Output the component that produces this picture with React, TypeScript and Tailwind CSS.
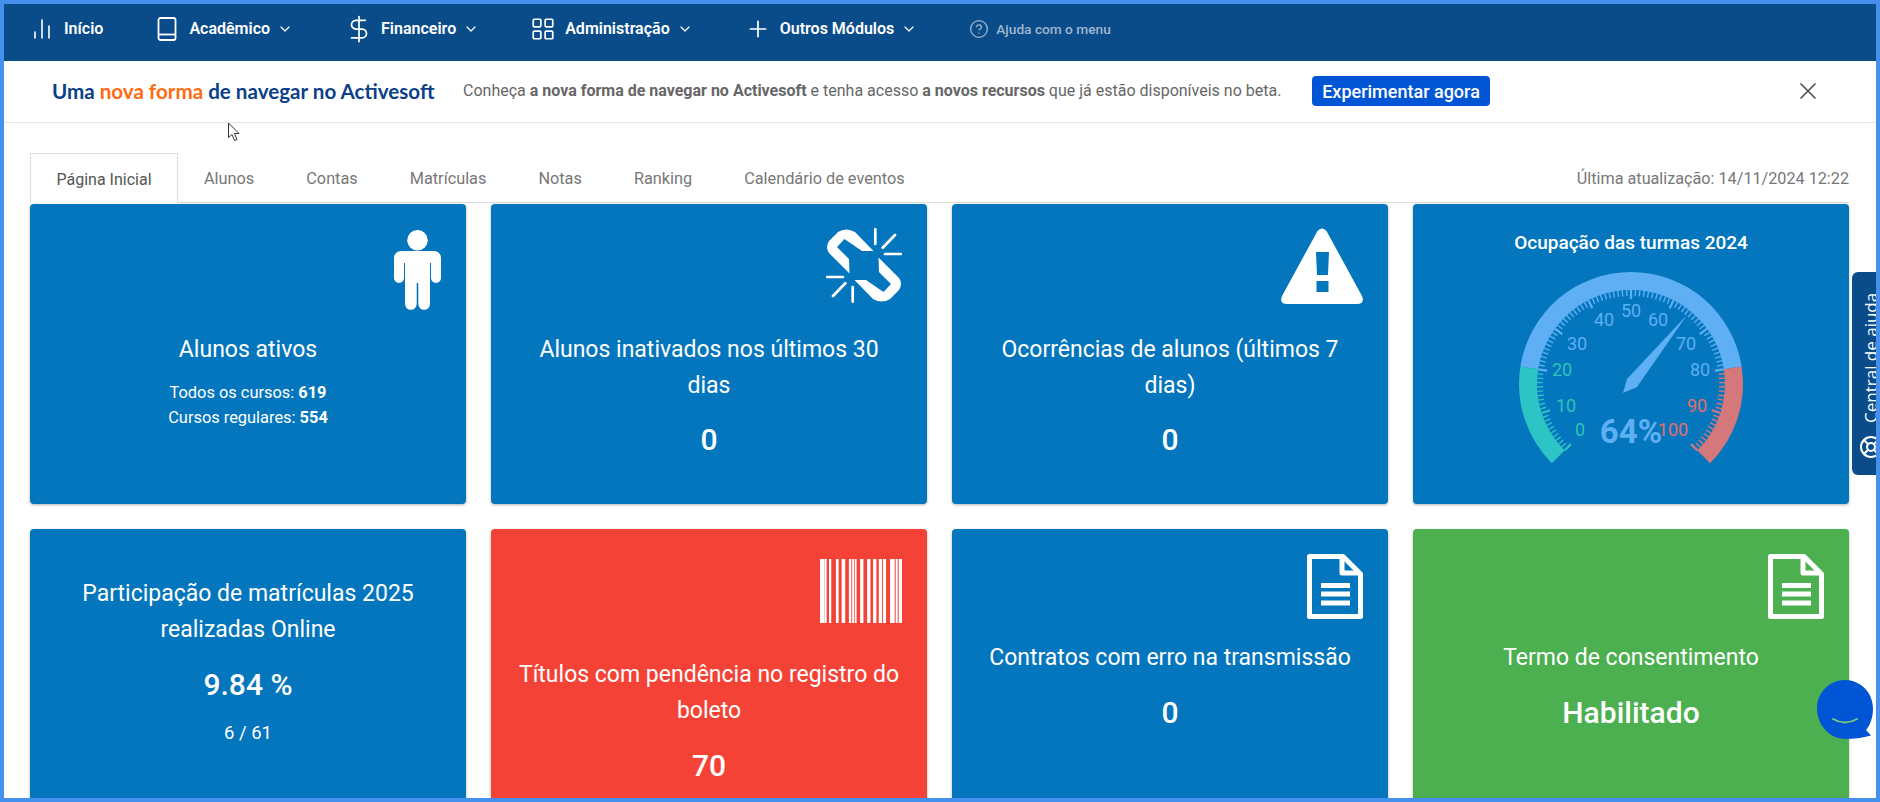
import type { ReactNode } from 'react';
import { ChartNoAxesColumn, ChevronDown, CircleHelp, DollarSign, LayoutGrid, LifeBuoy, Plus, X } from 'lucide-react';

function BookIcon() {
  return (
    <svg width="20" height="24" viewBox="0 0 20 24" fill="none" stroke="white" strokeWidth="1.8">
      <rect x="1.500" y="1" width="17" height="22" rx="2" />
      <path d="M1.500 17.500h17" />
    </svg>
  );
}

function NavItem({ icon, label, chevron = true }: { icon: ReactNode; label: string; chevron?: boolean }) {
  return (
    <div className="flex items-center">
      <span className="flex w-8 justify-center">{icon}</span>
      <span className="ml-[6px] text-[16px] font-semibold text-white">{label}</span>
      {chevron && <ChevronDown className="ml-[7px] h-[16px] w-[16px] text-white" strokeWidth={1.8} />}
    </div>
  );
}

function TopNav() {
  return (
    <nav className="flex h-[57px] items-center bg-[#0a4c8a] pb-[7px] pl-[26px] shadow-[0_1px_3px_rgba(0,0,0,0.3)]">
      <NavItem icon={<ChartNoAxesColumn size={24} color="white" strokeWidth={1.6} />} label="Início" chevron={false} />
      <div className="ml-[48px]">
        <NavItem icon={<BookIcon />} label="Acadêmico" />
      </div>
      <div className="ml-[50px]">
        <NavItem icon={<DollarSign size={30} color="white" strokeWidth={1.4} />} label="Financeiro" />
      </div>
      <div className="ml-[48px]">
        <NavItem icon={<LayoutGrid size={26} color="white" strokeWidth={1.6} />} label="Administração" />
      </div>
      <div className="ml-[49px]">
        <NavItem icon={<Plus size={26} color="white" strokeWidth={1.6} />} label="Outros Módulos" />
      </div>
      <div className="ml-[52px] flex items-center text-[#9fb6cf]">
        <CircleHelp size={20} strokeWidth={1.6} />
        <span className="ml-[7px] text-[13.700px] font-medium">Ajuda com o menu</span>
      </div>
    </nav>
  );
}

function Banner() {
  return (
    <div className="flex h-[62px] items-center border-b border-[#e6e6e6] bg-white pb-[1px] pl-[52px]">
      <span className="w-[381px] whitespace-nowrap font-['Lato',sans-serif] text-[20.600px] font-bold text-[#0b3f8a]">
        Uma <span className="text-[#ff6a13]">nova forma</span> de navegar no Activesoft
      </span>
      <span className="ml-[30px] w-[819px] whitespace-nowrap text-[16px] text-[#666]">
        Conheça <b className="font-bold">a nova forma de navegar no Activesoft</b> e tenha acesso{' '}
        <b className="font-bold">a novos recursos</b> que já estão disponíveis no beta.
      </span>
      <button className="ml-[30px] h-[30px] w-[178px] rounded-[4px] bg-[#0055d4] text-[18px] font-medium text-white">
        Experimentar agora
      </button>
      <X className="ml-[304px] text-[#555]" size={28} strokeWidth={1.5} />
    </div>
  );
}

const tabs = ['Alunos', 'Contas', 'Matrículas', 'Notas', 'Ranking', 'Calendário de eventos'];

function Tabs() {
  return (
    <div className="ml-[30px] mt-[30px] flex h-[50px] w-[1819px] items-center border-b border-[#ddd] pt-[3px] text-[16.300px] text-[#777]">
      <div className="-mb-[1px] -mt-[3px] flex h-[50px] w-[148px] items-center justify-center border border-b-0 border-[#ddd] bg-white pt-[3px] text-[16px] text-[#555]">
        Página Inicial
      </div>
      {tabs.map((tab) => (
        <span key={tab} className="ml-[26px] mr-[26px]">
          {tab}
        </span>
      ))}
      <span className="ml-auto text-[16.200px]">Última atualização: 14/11/2024 12:22</span>
    </div>
  );
}

function PersonIcon() {
  return (
    <svg width="47" height="80" viewBox="0 0 47 80" fill="white">
      <circle cx="23.500" cy="10.300" r="10.300" />
      <path d="M7 21H40a7 7 0 0 1 7 7V48a5 5 0 0 1-10 0V33H36V74a5.850 5.850 0 0 1-11.700 0V53H22.700V74a5.850 5.850 0 0 1-11.700 0V33H10V48a5 5 0 0 1-10 0V28a7 7 0 0 1 7-7Z" />
    </svg>
  );
}

function BrokenLinkIcon() {
  const link = 'M47.500 23L29 4Q20 -1 12 4L3 13Q-1 19.500 3 25L23.500 45.500L23 31L11 19L18.500 11L36 23Z';
  const rays = 'M49.300 1.300V16M69 7L56.700 19.700M59 26H74.700';
  return (
    <svg width="76" height="75" viewBox="0 0 76 75" fill="none">
      <path d={link} fill="white" />
      <path d={link} fill="white" transform="rotate(180 38 37.500)" />
      <path d={rays} stroke="white" strokeWidth="2.700" strokeLinecap="round" />
      <path d={rays} stroke="white" strokeWidth="2.700" strokeLinecap="round" transform="rotate(180 38 37.500)" />
    </svg>
  );
}

function WarningIcon() {
  return (
    <svg width="82" height="76" viewBox="0 0 82 76">
      <path
        fill="white"
        fillRule="evenodd"
        d="M36.500 3Q41-2 45.500 3L81 68Q84 76 76 76H6Q-2 76 1 68ZM35 24L36 47H47L48 24ZM35.500 53V64H47.500V53Z"
      />
    </svg>
  );
}

const barcodeBars = [
  [0, 4.7],
  [5, 1.7],
  [9, 2.3],
  [16, 2.7],
  [21.7, 3.6],
  [29, 2.4],
  [32.3, 2],
  [35, 1.7],
  [40.3, 3.3],
  [47.3, 3.3],
  [53.3, 3.3],
  [59, 3.3],
  [63.3, 3],
  [70.3, 4.7],
  [76, 2],
  [79, 3.3],
];

function BarcodeIcon() {
  return (
    <svg width="82" height="64" viewBox="0 0 82.300 64" fill="white" preserveAspectRatio="none">
      {barcodeBars.map(([x, w]) => (
        <rect key={x} x={x} y="0" width={w} height="64" />
      ))}
    </svg>
  );
}

function DocIcon() {
  return (
    <svg width="56" height="65" viewBox="0 0 56 65" fill="none" stroke="white" strokeWidth="5" strokeLinejoin="round">
      <path d="M2.500 2.500H36L53.500 20V62.500H2.500Z" />
      <path d="M35 2.500V19H53" />
      <path d="M14 31.500H43M14 40H43M14 49H43" />
    </svg>
  );
}

const gaugeLabels = [
  { text: '0', x: -51, y: 46, color: '#2ec4b6' },
  { text: '10', x: -65, y: 22, color: '#2ec4b6' },
  { text: '20', x: -69, y: -14, color: '#2ec4b6' },
  { text: '30', x: -54, y: -40, color: '#5eaff3' },
  { text: '40', x: -27, y: -64, color: '#5eaff3' },
  { text: '50', x: 0, y: -73, color: '#5eaff3' },
  { text: '60', x: 27, y: -64, color: '#5eaff3' },
  { text: '70', x: 55, y: -40, color: '#5eaff3' },
  { text: '80', x: 69, y: -14, color: '#5eaff3' },
  { text: '90', x: 66, y: 22, color: '#e0706c' },
  { text: '100', x: 42, y: 46, color: '#e0706c' },
];

const toPoint = (value: number, r: number) => {
  const a = ((-135 + value * 2.7) * Math.PI) / 180;
  return { x: 120 + r * Math.sin(a), y: 120 - r * Math.cos(a) };
};

function arcPath(from: number, to: number, outer: number, inner: number) {
  const a = toPoint(from, outer);
  const b = toPoint(to, outer);
  const c = toPoint(to, inner);
  const d = toPoint(from, inner);
  const large = (to - from) * 2.7 > 180 ? 1 : 0;
  return `M${a.x} ${a.y}A${outer} ${outer} 0 ${large} 1 ${b.x} ${b.y}L${c.x} ${c.y}A${inner} ${inner} 0 ${large} 0 ${d.x} ${d.y}Z`;
}

const zoneColor = (v: number) => (v < 20 ? '#2cc4c4' : v <= 80 ? '#5eaff3' : '#d4787c');

function Gauge() {
  const ticks = Array.from({ length: 101 }, (_, v) => v);
  return (
    <svg width="240" height="210" viewBox="0 0 240 210" className="mx-auto mt-[8px] block">
      <path d={arcPath(0, 20, 112, 94)} fill="#2cc4c4" />
      <path d={arcPath(20, 80, 112, 94)} fill="#5eaff3" />
      <path d={arcPath(80, 100, 112, 94)} fill="#d4787c" />
      {ticks.map((v) => {
        const major = v % 10 === 0;
        const p1 = toPoint(v, 94);
        const p2 = toPoint(v, major ? 85 : 88);
        return <line key={v} x1={p1.x} y1={p1.y} x2={p2.x} y2={p2.y} stroke={zoneColor(v)} strokeWidth={major ? 2.2 : 1.4} />;
      })}
      {gaugeLabels.map((l) => (
        <text key={l.text} x={120 + l.x} y={120 + l.y + 6} textAnchor="middle" fontSize="18" fontFamily="Roboto, sans-serif" fill={l.color}>
          {l.text}
        </text>
      ))}
      <polygon points="112,129 116,115 176,51 126,123" fill="#5eaff3" />
      <text x="120" y="179" textAnchor="middle" fontSize="33" fontWeight="700" fontFamily="Roboto, sans-serif" fill="#5eaff3">
        64%
      </text>
    </svg>
  );
}

function Card({ color = 'bg-[#0476bd]', className = '', children }: { color?: string; className?: string; children: ReactNode }) {
  return (
    <div className={`overflow-hidden rounded-[4px] text-center text-white shadow-[0_1px_3px_rgba(0,0,0,0.3)] ${color} ${className}`}>
      {children}
    </div>
  );
}

function Title({ children }: { children: ReactNode }) {
  return <div className="whitespace-nowrap text-[23px] leading-[36px]">{children}</div>;
}

function Value({ children, className = 'mt-[19px]' }: { children: ReactNode; className?: string }) {
  return <div className={`text-[30px] font-medium leading-[36px] ${className}`}>{children}</div>;
}

export default function App() {
  return (
    <div className="relative h-[802px] w-[1880px] overflow-hidden bg-white pt-[4px] font-['Roboto',sans-serif]">
      <TopNav />
      <Banner />
      <Tabs />

      <div className="ml-[30px] mt-[1px] grid w-[1819px] grid-cols-4 gap-x-[25px] gap-y-[25px]">
        <Card className="h-[300px]">
          <div className="mb-[22px] flex h-[106px] justify-end pr-[25px] pt-[26px]">
            <PersonIcon />
          </div>
          <Title>Alunos ativos</Title>
          <div className="mt-[12px] text-[16.400px] leading-[25px]">
            Todos os cursos: <b className="font-bold">619</b>
            <br />
            Cursos regulares: <b className="font-bold">554</b>
          </div>
        </Card>

        <Card className="h-[300px]">
          <div className="mb-[22px] flex h-[106px] justify-end pr-[25px] pt-[24px]">
            <BrokenLinkIcon />
          </div>
          <Title>
            Alunos inativados nos últimos 30
            <br />
            dias
          </Title>
          <Value className="mt-[18px]">0</Value>
        </Card>

        <Card className="h-[300px]">
          <div className="mb-[22px] flex h-[106px] justify-end pr-[25px] pt-[24px]">
            <WarningIcon />
          </div>
          <Title>
            Ocorrências de alunos (últimos 7
            <br />
            dias)
          </Title>
          <Value className="mt-[18px]">0</Value>
        </Card>

        <Card className="h-[300px]">
          <div className="pt-[26px] text-[19px] font-medium leading-[26px]">Ocupação das turmas 2024</div>
          <Gauge />
        </Card>

        <Card className="h-[280px] pt-[47px]">
          <Title>
            Participação de matrículas 2025
            <br />
            realizadas Online
          </Title>
          <Value>9.84 %</Value>
          <div className="mt-[18px] text-[18.500px] leading-[25px]">6 / 61</div>
        </Card>

        <Card color="bg-[#f44336]" className="h-[280px]">
          <div className="flex justify-end pr-[25px] pt-[30px]">
            <BarcodeIcon />
          </div>
          <div className="mt-[34px]">
            <Title>
              Títulos com pendência no registro do
              <br />
              boleto
            </Title>
          </div>
          <Value>70</Value>
        </Card>

        <Card className="h-[280px]">
          <div className="flex justify-end pr-[25px] pt-[25px]">
            <DocIcon />
          </div>
          <div className="mt-[21px]">
            <Title>Contratos com erro na transmissão</Title>
          </div>
          <Value>0</Value>
        </Card>

        <Card color="bg-[#4caf50]" className="h-[280px]">
          <div className="flex justify-end pr-[25px] pt-[25px]">
            <DocIcon />
          </div>
          <div className="mt-[21px]">
            <Title>Termo de consentimento</Title>
          </div>
          <Value>Habilitado</Value>
        </Card>
      </div>

      {/* help tab, chat bubble and mouse pointer sit above the page */}
      <div className="absolute left-[1852px] top-[272px] flex h-[203px] w-[40px] rotate-180 items-center justify-end gap-[12px] rounded-r-[6px] bg-[#0a4c8a] pl-[2px] text-white [writing-mode:vertical-rl]">
        <span className="flex items-center gap-[12px] pb-[21px] pt-[12px] font-['Open_Sans',sans-serif] text-[17px]">
          <LifeBuoy size={24} className="rotate-90" />
          Central de ajuda
        </span>
      </div>

      <svg className="absolute left-[1815px] top-[678px]" width="60" height="64" viewBox="0 0 60 64">
        <path d="M30 2C14.500 2 2 14.500 2 30.500S14.500 61 30 61C38 61 48 60 56 57.500L51 52C55.500 47 58 39 58 30.500C58 14.500 45.500 2 30 2Z" fill="#0055d4" />
        <path d="M18 41Q30 48 42 41" fill="none" stroke="#7cc77f" strokeWidth="2" strokeLinecap="round" />
      </svg>

      <svg className="absolute left-[227px] top-[122px]" width="14" height="20" viewBox="0 0 14 20">
        <path d="M1.500 1V15.500L5 12.500L7.500 18.500L10 17.500L7.500 11.500H12Z" fill="white" stroke="#333" strokeWidth="1" />
      </svg>

      {/* blue recording frame */}
      <div className="pointer-events-none absolute inset-0 border-[4px] border-[#4490ec]" />
    </div>
  );
}
